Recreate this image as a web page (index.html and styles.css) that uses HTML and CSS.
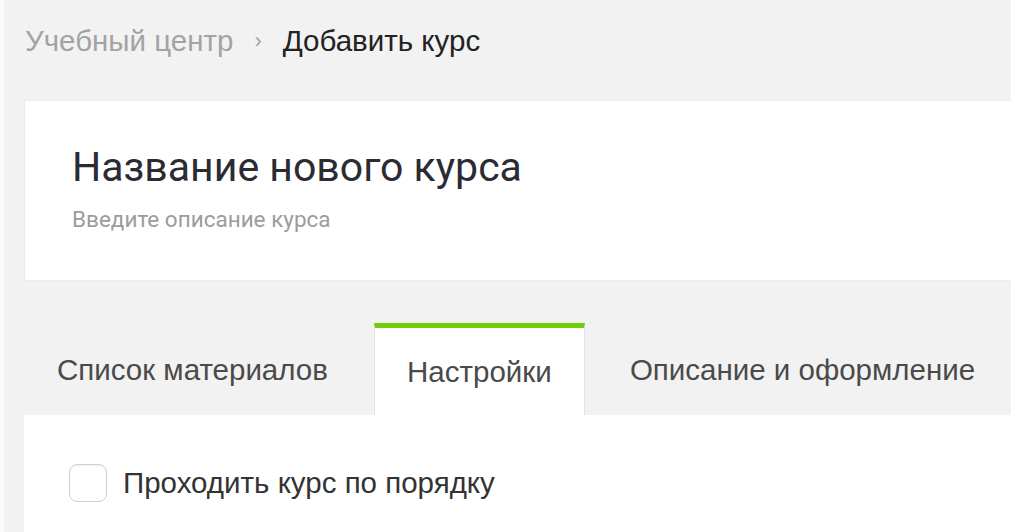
FILE: index.html
```html
<!DOCTYPE html>
<html lang="ru">
<head>
    <meta charset="UTF-8">
    <meta name="viewport" content="width=device-width, initial-scale=1.0">
    <title>Добавить курс</title>
    <link rel="stylesheet" href="styles.css">
</head>
<body>

<div class="page">
    <nav class="breadcrumbs">
        <a href="#" class="crumb-link">Учебный центр</a>
        <span class="crumb-sep">›</span>
        <span class="crumb-current">Добавить курс</span>
    </nav>

    <section class="course-card">
        <h1 class="course-title">Название нового курса</h1>
        <p class="course-desc">Введите описание курса</p>
    </section>

    <div class="tabs">
        <div class="tab">Список материалов</div>
        <div class="tab tab-active">Настройки</div>
        <div class="tab">Описание и оформление</div>
    </div>

    <div class="tab-body">
        <label class="check-row">
            <input type="checkbox" class="check-input">
            <span class="check-box"></span>
            <span class="check-label">Проходить курс по порядку</span>
        </label>
    </div>
</div>

</body>
</html>
```

FILE: styles.css
```css
body {
    margin: 0;
    padding: 0;
    background-color: #fafafa;
    font-family: 'Liberation Sans', Arial, sans-serif;
    overflow: hidden;
}

.page {
    margin-left: 4px;
    background-color: #f2f2f2;
    min-height: 532px;
    padding-left: 20px;
}

.breadcrumbs {
    display: flex;
    align-items: center;
    height: 82px;
    font-size: 29.5px;
    padding-left: 1px;
    white-space: nowrap;
}

.crumb-link {
    color: #a3a3a3;
    text-decoration: none;
}

.crumb-sep {
    color: #a3a3a3;
    font-size: 22px;
    margin: 0 21px 0 21px;
}

.crumb-current {
    color: #222;
}

.course-card {
    background-color: #fff;
    border: 1px solid #ebedf0;
    border-right: none;
    margin-top: 18px;
    height: 181px;
    padding: 0 0 0 47px;
    box-sizing: border-box;
}

.course-title {
    font-family: Roboto, 'Liberation Sans', sans-serif;
    font-weight: 400;
    font-size: 41px;
    color: #2b2b33;
    margin: 0;
    padding-top: 42px;
    line-height: 48px;
}

.course-desc {
    font-family: Roboto, 'Liberation Sans', sans-serif;
    font-size: 22.5px;
    color: #9c9c9c;
    margin: 15px 0 0;
}

.tabs {
    display: flex;
    margin-top: 42px;
    height: 92px;
    white-space: nowrap;
}

.tab {
    display: flex;
    flex-shrink: 0;
    align-items: center;
    justify-content: center;
    padding: 2px 46px 0 33px;
    font-size: 29.5px;
    color: #4a4a4a;
    box-sizing: border-box;
}

.tab-active {
    width: 211px;
    padding: 0;
    background-color: #fff;
    border-top: 5px solid #72cc0a;
    border-left: 1px solid #e2e2e2;
    border-right: 1px solid #e2e2e2;
}

.tab-active + .tab {
    padding-left: 45px;
}

.tab-body {
    background-color: #fff;
    height: 140px;
    padding: 49px 0 0 45px;
    box-sizing: border-box;
}

.check-row {
    display: flex;
    align-items: center;
    cursor: pointer;
}

.check-input {
    display: none;
}

.check-box {
    width: 38px;
    height: 38px;
    border: 1px solid #d0d0d0;
    border-radius: 8px;
    box-sizing: border-box;
    box-shadow: inset 0 1px 2px rgba(0, 0, 0, 0.06);
}

.check-label {
    font-size: 29.5px;
    color: #333;
    margin-left: 16px;
}
```
